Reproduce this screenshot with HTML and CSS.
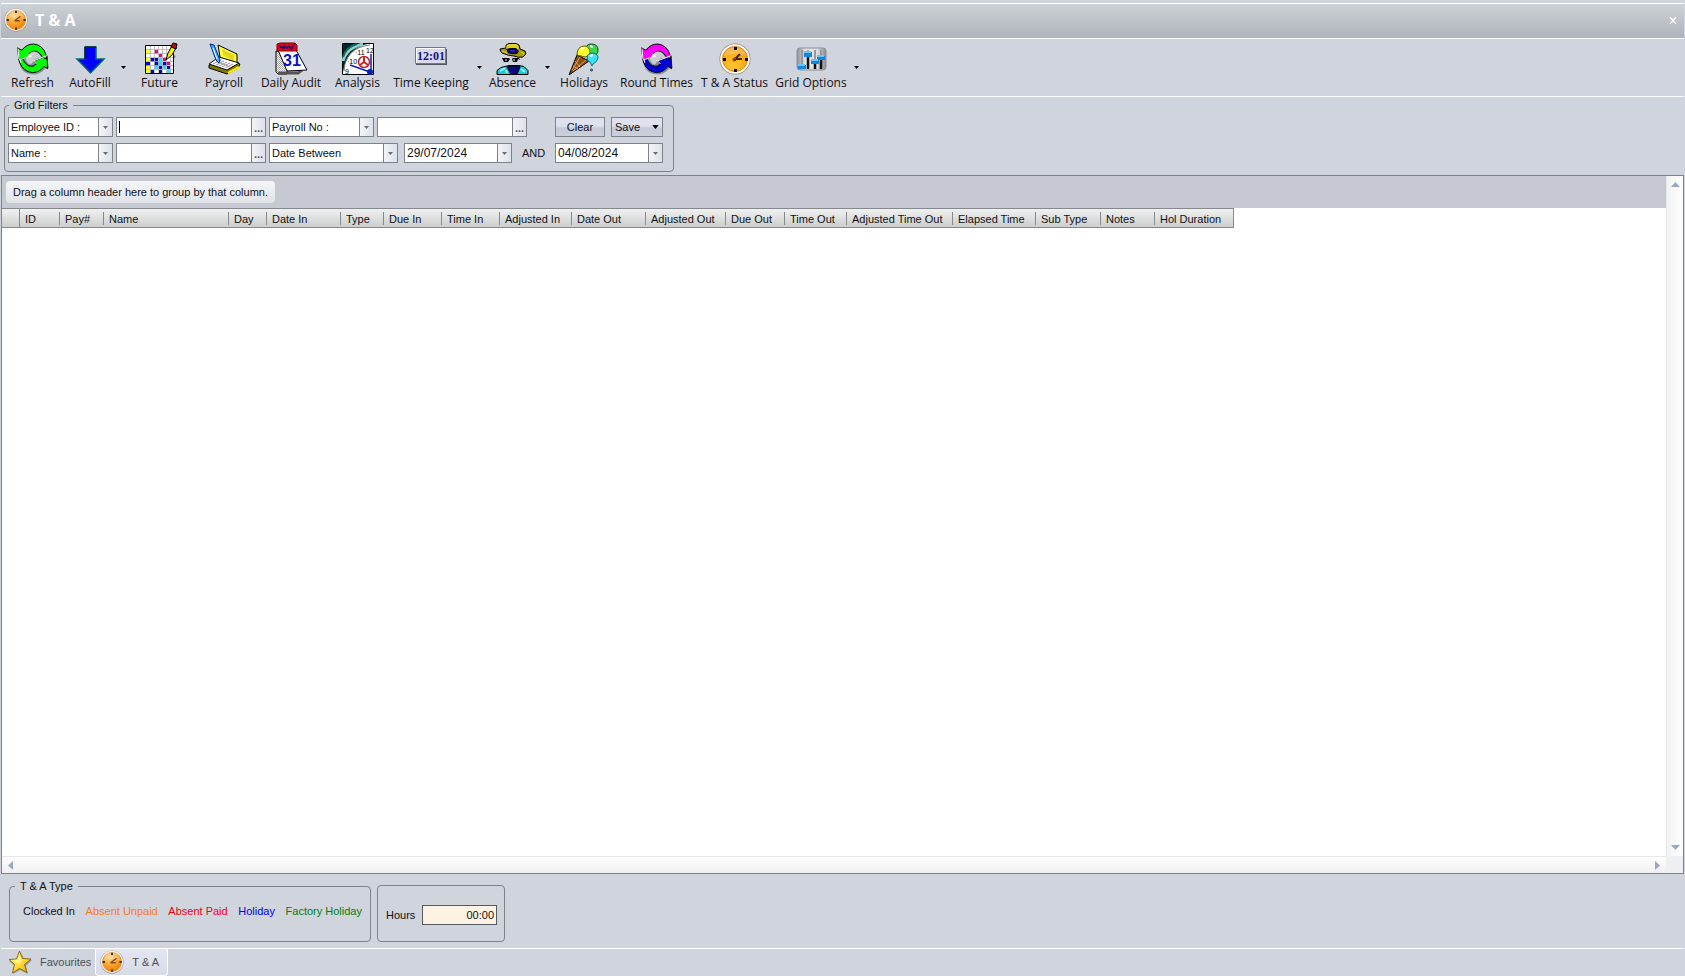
FILE: index.html
```
<!DOCTYPE html>
<html lang="en">
<head>
<meta charset="utf-8">
<title>T &amp; A</title>
<link rel="stylesheet" href="styles.css">
</head>
<body>
<svg class="defs" width="0" height="0" aria-hidden="true">
  <defs>
    <radialGradient id="face" cx="40%" cy="30%" r="75%">
      <stop offset="0" stop-color="#ffd58c"/><stop offset=".45" stop-color="#fba832"/><stop offset="1" stop-color="#f07c00"/>
    </radialGradient>
    <radialGradient id="faceGold" cx="45%" cy="75%" r="80%">
      <stop offset="0" stop-color="#ffc833"/><stop offset=".6" stop-color="#ffa90f"/><stop offset="1" stop-color="#f08a00"/>
    </radialGradient>
    <linearGradient id="gold" x1="0" y1="0" x2="1" y2="1">
      <stop offset="0" stop-color="#fff04a"/><stop offset=".5" stop-color="#ffe23a"/><stop offset="1" stop-color="#e09a10"/>
    </linearGradient>
    <linearGradient id="panel" x1="0" y1="0" x2="1" y2="0">
      <stop offset="0" stop-color="#8e9296"/><stop offset=".3" stop-color="#e4e6e8"/><stop offset=".7" stop-color="#dcdee0"/><stop offset="1" stop-color="#868a8e"/>
    </linearGradient>
    <pattern id="hatch" width="2" height="2" patternUnits="userSpaceOnUse">
      <rect width="2" height="2" fill="#fff"/><rect width="1" height="1" fill="#a8a8a8"/><rect x="1" y="1" width="1" height="1" fill="#a8a8a8"/>
    </pattern>
    <symbol id="clock" viewBox="0 0 32 32">
      <circle cx="16" cy="16" r="15.5" fill="#a39e98"/>
      <circle cx="16" cy="15.7" r="14.8" fill="#f7f3ec"/>
      <circle cx="16" cy="16" r="12.8" fill="url(#face)" stroke="#d99a4c"/>
      <path d="M5 14a11 11 0 0 1 22 0q-11-5-22 0z" fill="#fff" opacity=".25"/>
      <path d="M16 3.500v3M16 26v3M3.500 16h3M26 16h3" stroke="#333" stroke-width="2.500"/>
      <path d="M14 17l8-6M14 17h7" stroke="#7b4d1c" stroke-width="1.800"/>
    </symbol>
    <symbol id="cycle" viewBox="0 0 33 32">
      <path d="M4 7q6-7 14-5 11 2 13 13l2 10-4 1q-5 6-12 6-9 0-13-7l-3-9z" fill="#8b8d92"/>
      <path class="cycle-bottom" d="M31.500 26L28 23.500Q23 30 16 30 6 29 2.500 19L2 15 6 16Q8 21 12 23q5 2 8-2L17 18.500 31 12.500z" stroke="#000"/>
      <path class="cycle-top" d="M.5 4.500L5 7Q10 .5 17 .5 27 1.500 30 12l.5 4-4-1.500Q24 10 21 8.500q-5-2-9 2.500l3.500 2L2 17z" stroke="#000"/>
      <path d="M12 11q5-5 10-1l4 5q-4-1-7 1l-5 6q-4-2-5-6z" fill="#c9ccd2"/>
      <path d="M2 17l13-4-3-2M31 12.500L17 18l3 3M3 16l1 4M1 5l1 11" fill="none" stroke="#fff" stroke-width="1"/>
    </symbol>
    <symbol id="down" viewBox="0 0 5 3"><path d="M0 0h5L2.500 3z"/></symbol>
  </defs>
</svg>

<div class="window">
  <header class="titlebar">
    <svg class="title-icon"><use href="#clock"/></svg>
    <h1 class="title">T &amp; A</h1>
    <button class="close" aria-label="Close"><svg width="8" height="7" viewBox="0 0 8 7"><path d="M1 0l6 7M7 0L1 7" stroke="#fff" stroke-width="1.300"/></svg></button>
  </header>

  <nav class="toolbar" aria-label="Main tools">
    <button class="tool"><svg class="icon cycle-green"><use href="#cycle"/></svg>Refresh</button>
    <button class="tool"><svg class="icon" viewBox="0 0 32 32"><path d="M11 4h11v12h8L16.500 30 3 16h8z" fill="#00f" stroke="#006a70" stroke-width="1.500"/><path d="M11 16V4h11" fill="none" stroke="#000"/></svg>AutoFill</button>
    <button class="drop" aria-label="AutoFill menu"><svg class="caret"><use href="#down"/></svg></button>
    <button class="tool">
      <svg class="icon" viewBox="0 0 32 32">
        <path d="M1.500 2.500h28v28h-28z" fill="#fff" stroke="#000"/>
        <path d="M2 7h4v4H2zM2 15h4v4H2zM2 23h4v3H2zM2 27h4v3H2z" fill="#ffff2a"/>
        <path d="M6 15h4v4H6zM10 19h4v4h-4zM6 27h4v3H6zM15 23h3v3h-3zM19 19h4v4h-4zM2 19h4v4H2zM10 15h4v4h-4zM15 27h3v3h-3zM23 23h3v3h-3z" fill="#0808b8"/>
        <path d="M10 7h4v4h-4zM15 11h3v3h-3zM19 15h3v3h-3zM23 19h3v3h-3z" fill="#d4107c"/>
        <path d="M15 15h3v4h-3zM19 23h3v3h-3zM23 27h4v3h-4zM10 23h4v3h-4zM14 19h4v4h-4z" fill="#2adcf4"/>
        <path d="M6.500 3v27M10.500 3v27M14.500 3v27M18.500 3v27M22.500 3v27M26.500 3v27M2 6.500h27M2 10.500h27M2 14.500h27M2 18.500h27M2 22.500h27M2 26.500h27" stroke="#b4b4b4" stroke-width=".8"/>
        <path d="M30 12l2 1-2 3z" fill="#888"/>
        <path d="M22 17l2-7 4-7 4 2-4 7z" fill="#ffed00" stroke="#000"/>
        <path d="M27 4l2-4 4 1-1 5z" fill="#b51010" stroke="#000"/>
      </svg>Future</button>
    <button class="tool">
      <svg class="icon" viewBox="0 0 32 32">
        <path d="M10 2l19 9v10l-4 3-13-10z" fill="#ffff48" stroke="#000"/><path d="M14 6l12 6v7l-11-7z" fill="#e4d71c"/>
        <path d="M1 22l11-7 20 6-2 4-11 6L1 25z" fill="#807800" stroke="#000"/>
        <path d="M1 21l10-7 20 6-12 7z" fill="#fff" stroke="#000"/>
        <path d="M5 21l8-4M8 22l8-4M11 23l8-4M14 24l8-4M17 25l8-4M8 18l14 6" stroke="#999"/>
        <path d="M20 30l11-6" stroke="#ffe900" stroke-width="2"/>
        <path d="M2 1l4 1 6 15-1 3-3-3z" fill="#35b4ff" stroke="#00298a"/><path d="M5 5l4 11" stroke="#fff"/>
      </svg>Payroll</button>
    <button class="tool">
      <svg class="icon" viewBox="0 0 32 32">
        <path d="M1 8h5l6 20v3H3l-2-2z" fill="url(#hatch)" stroke="#000"/>
        <path d="M3 30h20l4-3" fill="none" stroke="#555" stroke-width="3"/>
        <path d="M3 7h18l11 20-20 1z" fill="#fff" stroke="#000"/>
        <path d="M2 1l3-1h15l2 2v6H2z" fill="#e80018" stroke="#700"/>
        <path d="M5 5V3l2 2 2-2v2l2-1 1 1 2-2 1 2 3-2-2 4" fill="none" stroke="#100a78" stroke-width="1.500"/>
        <text x="8" y="23" class="cal-text">31</text>
      </svg>Daily Audit</button>
    <button class="tool">
      <svg class="icon" viewBox="0 0 32 32">
        <path d="M.5.5h31v31H.5z" fill="#fff" stroke="#000"/>
        <path d="M1 1h24Q5 6 1 29z" fill="#002828"/><path d="M1 18Q4 5 21 1" fill="none" stroke="#88d4c8" stroke-width="3"/><path d="M1 14Q4 4 15 1" fill="none" stroke="#1b6263" stroke-width="2"/>
        <path d="M2 28Q3 5 28 2" fill="none" stroke="#777"/>
        <text x="13" y="12" class="dial-text">·11</text><text x="24" y="10" class="dial-text">12</text><text x="5" y="21" class="dial-text">·10</text><text x="3" y="31" class="dial-text">9</text>
        <circle cx="22" cy="19" r="5.500" fill="#fff" stroke="#c92222" stroke-width="1.500"/><path d="M22 14v5l-4 3M22 19l4 3" fill="none" stroke="#c92222" stroke-width="2"/>
        <path d="M8 22l20 7M29 11v17" stroke="#0a1eb0" stroke-width="1.500"/><circle cx="28" cy="29" r="3" fill="#0a1eb0"/>
      </svg>Analysis</button>
    <button class="tool">
      <svg class="icon" viewBox="0 0 32 32">
        <path d="M1 6h31v16H1z" fill="#55555d"/><path d="M.5 4.500h30v16H.5z" fill="#d9d9f0" stroke="#777785"/><path d="M1.500 20V5.500h28" fill="none" stroke="#fff"/>
        <text x="16" y="17" class="digital-text" text-anchor="middle">12:01</text>
      </svg>Time Keeping</button>
    <button class="drop" aria-label="Time Keeping menu"><svg class="caret"><use href="#down"/></svg></button>
    <button class="tool">
      <svg class="icon" viewBox="0 0 32 32">
        <path d="M3 6l6-1V2l3-1.500h7L22 2l1 4 5 2 1 3-3 3q-5 1-9-1-5 0-12-3-2-2-2-4z" fill="#a89f08" stroke="#000"/>
        <path d="M10 2.500l3-1h6l2 1.500v3H10zM5 8l5 2M24 9l3 2" fill="#dbd11b" stroke="#e6dc3a"/>
        <path d="M9 6l4-1h6l3 3-2 3q-5 1-9-1z" fill="#06064a"/><path d="M13 8h5" stroke="#2222b8" stroke-width="2"/>
        <path d="M5 15h7l1 1h2l1-1h6l1 2-2-1-1 3h-4l-1-3h-2l-2 3H7z" fill="#000"/><path d="M8 17h2M16 17h2" stroke="#fff"/>
        <path d="M0 31.500v-4l4-3 8-2h10l5 1 4 4v4z" fill="#1cc9d3" stroke="#000"/>
        <path d="M10 24l4-1h7l2 1-3 7.500h-6z" fill="#08087a" stroke="#000"/><path d="M3 28l5-3M24 26l4 3M9 27l1 3" stroke="#9ff6f8" stroke-width="2"/>
      </svg>Absence</button>
    <button class="drop" aria-label="Absence menu"><svg class="caret"><use href="#down"/></svg></button>
    <button class="tool">
      <svg class="icon" viewBox="0 0 32 32">
        <path d="M1 32L9 12l12 6z" fill="#8a4d18" stroke="#000"/><path d="M7 18l5 6M5 23l5 3M12 14L4 27M18 17L5 28" stroke="#e5a254"/>
        <path d="M18 6q0-5 5-5 7 0 7 6 0 5-4 5-6 0-8-6z" fill="#35da49" stroke="#064d10"/>
        <path d="M9 12q0-9 8-9 5 1 5 7-1 4-5 4z" fill="#ffff28" stroke="#665f00"/>
        <path d="M19 15q0-5 6-5 5 1 5 5-1 4-5 6l-1 2-2-4q-3-1-3-4z" fill="#3be4f0" stroke="#067480"/>
        <circle cx="23.500" cy="27" r="1" fill="#6adbe5" stroke="#033"/><path d="M13 6l2-1M22 3l3 1M22 13l3-1" stroke="#fff" stroke-width="2"/>
      </svg>Holidays</button>
    <button class="tool"><svg class="icon cycle-duo"><use href="#cycle"/></svg>Round Times</button>
    <button class="tool">
      <svg class="icon" viewBox="0 0 32 32">
        <circle cx="16" cy="16" r="15.500" fill="#9c8664"/><circle cx="16" cy="16" r="14.800" fill="#fffaf0"/><circle cx="16" cy="16" r="12.500" fill="url(#faceGold)" stroke="#c88828"/>
        <path d="M5 13q1-8 11-9 10 1 11 9-10-4-22 0z" fill="#fff" opacity=".28"/>
        <path d="M15 4h3v3h-3zM15 26h3v3h-3zM4 15h3v3H4zM26 15h3v3h-3z" fill="#000"/><path d="M15 17l6-6M16 16h7" stroke="#4a2400" stroke-width="2"/><circle cx="15.500" cy="16.500" r="2" fill="#8a3e00"/>
      </svg>T &amp; A Status</button>
    <button class="tool">
      <svg class="icon" viewBox="0 0 32 32">
        <rect x="2" y="5" width="29" height="22" rx="3" fill="url(#panel)" stroke="#8b8f94"/>
        <path d="M7 7v18M13 7v18M20 7v18M26 7v18" stroke="#999" stroke-width="2"/><path d="M7 22v4M13 13v13M20 20v6M26 17v9" stroke="#111" stroke-width="2.500"/>
        <path d="M3 22h8v4H3zM9 9h8v5H9zM16 17h8v4h-8zM22 13h8v4h-8z" fill="#1687d8"/><path d="M3 22h7M9 9h7M16 17h7M22 13h7" stroke="#6cc4f8" stroke-width="2"/>
      </svg>Grid Options</button>
    <button class="drop" aria-label="Grid Options menu"><svg class="caret"><use href="#down"/></svg></button>
  </nav>

  <fieldset class="group filters">
    <legend>Grid Filters</legend>
    <div class="filter-row">
      <div class="combo key"><select aria-label="First filter field"><option>Employee ID :</option></select><span class="cell"><svg class="caret"><use href="#down"/></svg></span></div>
      <div class="lookup"><input class="current" type="text" aria-label="Employee ID"><button class="cell dots" aria-label="Find employee">...</button></div>
      <div class="combo key"><select aria-label="Second filter field"><option>Payroll No :</option></select><span class="cell"><svg class="caret"><use href="#down"/></svg></span></div>
      <div class="lookup"><input type="text" aria-label="Payroll number"><button class="cell dots" aria-label="Find payroll number">...</button></div>
      <div class="actions"><button class="btn clear">Clear</button><button class="btn save">Save<svg class="caret big"><use href="#down"/></svg></button></div>
    </div>
    <div class="filter-row">
      <div class="combo key"><select aria-label="Third filter field"><option>Name :</option></select><span class="cell"><svg class="caret"><use href="#down"/></svg></span></div>
      <div class="lookup"><input type="text" aria-label="Name"><button class="cell dots" aria-label="Find name">...</button></div>
      <div class="combo range"><select aria-label="Date condition"><option>Date Between</option></select><span class="cell"><svg class="caret"><use href="#down"/></svg></span></div>
      <div class="dates">
        <div class="lookup date"><input type="text" aria-label="Start date" value="29/07/2024"><button class="cell" aria-label="Pick start date"><svg class="caret"><use href="#down"/></svg></button></div>
        <span class="and">AND</span>
        <div class="lookup date"><input type="text" aria-label="End date" value="04/08/2024"><button class="cell" aria-label="Pick end date"><svg class="caret"><use href="#down"/></svg></button></div>
      </div>
    </div>
  </fieldset>

  <main class="grid">
    <div class="sheet">
      <div class="groupbar"><span class="hint">Drag a column header here to group by that column.</span></div>
      <table class="records">
        <colgroup><col class="w17"><col class="w40"><col class="w44"><col class="w125"><col class="w38"><col class="w74"><col class="w43"><col class="w58"><col class="w58"><col class="w72"><col class="w74"><col class="w80"><col class="w59"><col class="w62"><col class="w106"><col class="w83"><col class="w65"><col class="w54"><col class="w79"></colgroup>
        <thead><tr><td></td><th>ID</th><th>Pay#</th><th>Name</th><th>Day</th><th>Date In</th><th>Type</th><th>Due In</th><th>Time In</th><th>Adjusted In</th><th>Date Out</th><th>Adjusted Out</th><th>Due Out</th><th>Time Out</th><th>Adjusted Time Out</th><th>Elapsed Time</th><th>Sub Type</th><th>Notes</th><th>Hol Duration</th></tr></thead>
      </table>
    </div>
    <div class="vscroll">
      <button aria-label="Scroll up"><svg width="9" height="5" viewBox="0 0 9 5"><path d="M0 5L4.500 0 9 5z"/></svg></button>
      <button aria-label="Scroll down"><svg width="9" height="5" viewBox="0 0 9 5"><path d="M0 0h9L4.500 5z"/></svg></button>
    </div>
    <div class="hscroll">
      <button aria-label="Scroll left"><svg width="5" height="9" viewBox="0 0 5 9"><path d="M5 0v9L0 4.500z"/></svg></button>
      <button aria-label="Scroll right"><svg width="5" height="9" viewBox="0 0 5 9"><path d="M0 0v9l5-4.500z"/></svg></button>
    </div>
    <div class="corner"></div>
  </main>

  <section class="summary">
    <fieldset class="group types">
      <legend>T &amp; A Type</legend>
      <ul class="legend"><li>Clocked In</li><li class="unpaid">Absent Unpaid</li><li class="paid">Absent Paid</li><li class="holiday">Holiday</li><li class="factory">Factory Holiday</li></ul>
    </fieldset>
    <div class="group hours"><label for="hours">Hours</label><input id="hours" type="text" value="00:00"></div>
  </section>

  <footer class="tabs">
    <button class="tab"><svg class="tab-icon" viewBox="0 0 24 24"><path d="M13 3l3 6 8 1-6 6 2 8-8-4-7 4 2-8-6-5 8-2z" fill="#777" opacity=".6"/><path d="M11.500 1l3 7.500 8.500.5-6.500 5.500 2.500 8-7.500-4-7 4.500 2-8.500L1 9.500 8.500 9z" fill="url(#gold)" stroke="#8b6813"/><path d="M11.500 3l2 7-2 4-8-4 6-.5z" fill="#fff9a8" opacity=".7"/></svg>Favourites</button>
    <button class="tab active"><svg class="tab-icon"><use href="#clock"/></svg>T &amp; A</button>
  </footer>
</div>
</body>
</html>
```
FILE: styles.css
```
* { box-sizing: border-box; }

body {
  margin: 0;
  background: #d0d4dd;
  color: #101014;
  font: 11px/14px "Liberation Sans", Arial, sans-serif;
}

button, input, select {
  margin: 0;
  padding: 0;
  border: 0;
  border-radius: 0;
  background: none;
  color: inherit;
  font: inherit;
  outline: 0;
}

.defs { position: absolute; }

.window {
  display: flex;
  flex-direction: column;
  min-height: 100vh;
  padding: 3px 1px 0;
}

/* Title bar */
.titlebar {
  display: flex;
  align-items: center;
  gap: 7px;
  height: 36px;
  padding: 0 7px 2px 3px;
  border-top: 1px solid #fff;
  border-bottom: 1px solid #fff;
  background: linear-gradient(#cdd2d6, #afb3bb);
}
.title-icon { width: 24px; height: 24px; }
.title {
  flex: 1;
  margin: 0;
  color: #fff;
  font: bold 16px/20px "Open Sans", "Noto Sans", sans-serif;
}
.close { display: flex; }

/* Toolbar */
.toolbar {
  display: grid;
  grid-template-columns: 57px 58px 8px 65px 64px 70px 63px 84px 12px 55px 14px 60px 85px 71px 82px 9px;
  height: 58px;
  padding: 4px 3px 0;
  border-bottom: 1px solid #fff;
}
.tool {
  display: flex;
  flex-direction: column;
  align-items: center;
  font: 12px/16px "Open Sans", "Noto Sans", sans-serif;
  white-space: nowrap;
}
.icon { width: 32px; height: 32px; overflow: visible; }
.drop { display: flex; justify-content: center; padding-top: 23px; }
.caret { width: 5px; height: 3px; }
.caret.big { width: 7px; height: 4px; }
.cycle-green { fill: #0f0; color: #0f0; }
.cycle-duo { fill: #00d; color: #f0f; }
.cycle-top { fill: currentColor; }
.cal-text { font: bold 16px "Liberation Sans", sans-serif; fill: #0a10d0; }
.dial-text { font: 7px "Liberation Sans", sans-serif; fill: #000; }
.digital-text { font: bold 12px "Liberation Serif", serif; fill: #14148c; }

/* Group boxes */
.group {
  min-width: 0;
  margin: 0;
  border: 1px solid #7d8188;
  border-radius: 4px;
}
.group legend { padding: 0 5px; line-height: 14px; }

/* Filters */
.filters {
  align-self: flex-start;
  width: 670px;
  height: 74px;
  margin: 1px 0 3px 3px;
  padding: 5px 3px 0;
}
.filters legend { margin-left: 1px; }
.filter-row { display: flex; gap: 3px; margin-bottom: 6px; }
.combo, .lookup {
  display: grid;
  grid-template-columns: 1fr 14px;
  height: 20px;
  border: 1px solid #7d8188;
  background: #fff;
}
.combo.key { width: 105px; }
.combo.range { width: 129px; }
.combo select {
  grid-area: 1 / 1 / 2 / 3;
  width: 100%;
  padding-left: 2px;
  appearance: none;
}
.combo .cell { grid-area: 1 / 2; pointer-events: none; }
.lookup { width: 150px; }
.lookup input { width: 100%; min-width: 0; padding-left: 2px; }
.lookup .current { background: linear-gradient(#000, #000) 2px 3px / 1px 12px no-repeat; }
.lookup.date { width: 108px; }
.lookup.date input { font-size: 12px; }
.cell {
  display: flex;
  align-items: center;
  justify-content: center;
  border-left: 1px solid #7d8188;
  background: linear-gradient(90deg, #f2f4f8, #dde1e9);
  fill: #666c76;
}
.cell.dots { align-items: flex-end; color: #555; font-weight: bold; line-height: 16px; }
.actions { display: flex; gap: 6px; margin-left: 25px; }
.btn {
  display: flex;
  align-items: center;
  justify-content: center;
  height: 20px;
  border: 1px solid #7d8188;
  background: linear-gradient(#dfe2ee 0 45%, #c6cad8 55%, #ccd0dc);
}
.clear { width: 50px; }
.save { width: 52px; gap: 12px; }
.dates { display: flex; align-items: center; margin-left: 3px; }
.and { width: 43px; text-align: center; }

/* Record grid */
.grid {
  display: grid;
  flex: 1;
  grid-template-columns: 1fr 17px;
  grid-template-rows: 1fr 17px;
  border: 1px solid #7d8188;
  background: #fff;
}
.groupbar { height: 32px; padding: 5px 4px; background: #c6c9d1; }
.hint {
  display: inline-block;
  padding: 4px 7px;
  border-radius: 4px;
  background: linear-gradient(#f4f6f9, #dfe3e8);
}
.records {
  width: 1231px;
  border: 1px solid #85888c;
  border-left: 0;
  border-spacing: 0;
  background: linear-gradient(#f0f2f2, #cbcecd);
  table-layout: fixed;
}
.records th, .records td { height: 18px; padding: 2px 0 0; font-weight: normal; text-align: left; white-space: nowrap; }
.records th {
  padding-left: 6px;
  background: linear-gradient(#85888c, #85888c) 0 3px / 1px 13px no-repeat;
}
.records td + th { background-position: 0 0; background-size: 1px 100%; }
.w17 { width: 17px; } .w38 { width: 38px; } .w40 { width: 40px; } .w43 { width: 43px; }
.w44 { width: 44px; } .w54 { width: 54px; } .w58 { width: 58px; } .w59 { width: 59px; }
.w62 { width: 62px; } .w65 { width: 65px; } .w72 { width: 72px; } .w74 { width: 74px; }
.w79 { width: 79px; } .w80 { width: 80px; } .w83 { width: 83px; } .w106 { width: 106px; }
.w125 { width: 125px; }

.vscroll, .hscroll { display: flex; justify-content: space-between; fill: #9ba8c4; }
.vscroll {
  flex-direction: column;
  align-items: center;
  padding: 6px 0;
  border-left: 1px solid #e6e8eb;
  background: linear-gradient(90deg, #f2f2f2, #fff);
}
.hscroll {
  align-items: center;
  padding: 0 6px;
  border-top: 1px solid #e8e8e8;
  background: linear-gradient(#fdfdfd, #f0f0f0);
}
.vscroll button, .hscroll button { display: flex; }
.corner { background: #edeff2; }

/* Summary */
.summary {
  display: flex;
  align-items: flex-end;
  gap: 6px;
  height: 74px;
  padding: 0 8px 6px;
}
.types { width: 362px; height: 63px; padding: 9px 8px 0 13px; }
.types legend { margin-left: -8px; }
.legend {
  display: flex;
  justify-content: space-between;
  margin: 0;
  padding: 2px 0 0;
  list-style: none;
  white-space: nowrap;
}
.unpaid { color: #f58018; }
.paid { color: #f00010; }
.holiday { color: #0000f0; }
.factory { color: #008010; }
.hours {
  display: flex;
  align-items: center;
  justify-content: space-between;
  width: 128px;
  height: 57px;
  padding: 3px 7px 0 8px;
}
.hours input {
  width: 75px;
  height: 20px;
  padding-right: 2px;
  border: 1px solid #555a60;
  background: #fdf3e2;
  text-align: right;
}

/* Tabs */
.tabs {
  display: flex;
  height: 28px;
  border-top: 1px solid #fff;
  color: #4c5057;
}
.tab { display: flex; align-items: center; gap: 8px; padding: 0 4px 2px 7px; }
.tab.active {
  padding: 0 8px 1px 4px;
  border: 1px solid #fff;
  border-top: 0;
  border-radius: 0 0 4px 4px;
  background: linear-gradient(#e3e6f2, #d8dbe6);
}
.tab-icon { width: 24px; height: 24px; }
```
